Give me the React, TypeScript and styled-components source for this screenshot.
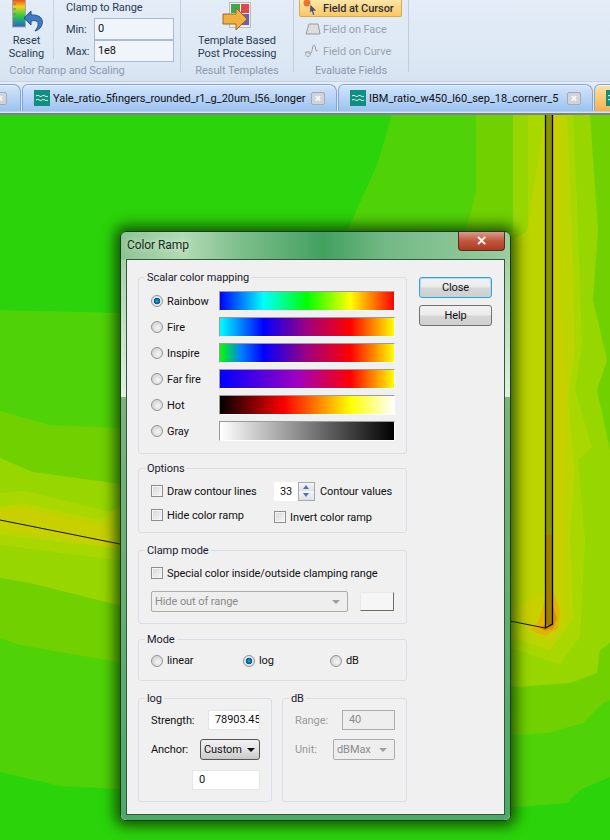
import React from "react";
import styled, { createGlobalStyle } from "styled-components";

const Global = createGlobalStyle`
  html, body { margin: 0; padding: 0; width: 610px; height: 840px; overflow: hidden; background: #2bd30a; }
  body { font-family: Roboto, "Noto Sans", sans-serif; font-size: 11px; letter-spacing: -0.08px; color: #111; }
`;
const Page = styled.div`width:610px;height:840px;display:flex;flex-direction:column;overflow:hidden;position:relative;`;
const Ribbon = styled.div`height:82px;display:flex;background:linear-gradient(#e3ecf7,#dde8f5 70%,#d7e3f1);border-bottom:1px solid #c5d2e2;flex:none;box-sizing:border-box;`;
const Group = styled.div<{ $w: number }>`width:${p => p.$w}px;flex:none;display:flex;flex-direction:column;position:relative;`;
const GroupBody = styled.div`height:64px;display:flex;`;
const GroupLabel = styled.div`height:14px;line-height:14px;text-align:center;color:#8b9bb0;`;
const Sep = styled.div`width:1px;height:72px;background:#c0ccdc;flex:none;`;
const InnerSep = styled.div`width:1px;height:59px;background:#c8d3e2;flex:none;`;
const BigButton = styled.div<{ $w: number }>`width:${p => p.$w}px;flex:none;display:flex;flex-direction:column;align-items:center;text-align:center;color:#2a3b52;line-height:13px;`;
const ClampCol = styled.div`display:flex;flex-direction:column;margin-left:12px;`;
const ClampTitle = styled.div`height:18px;line-height:15px;color:#2a3b52;`;
const ClampRow = styled.div`display:flex;align-items:center;height:22px;`;
const ClampLab = styled.div`width:28px;color:#2a3b52;`;
const ClampInput = styled.div`width:80px;height:22px;box-sizing:border-box;background:#f0f5fb;border:1px solid #abbbce;line-height:20px;padding-left:3px;`;
const SmallCol = styled.div`display:flex;flex-direction:column;margin-left:5px;`;
const SmallBtn = styled.div<{ $on?: boolean }>`height:22px;width:103px;box-sizing:border-box;display:flex;align-items:center;gap:2px;padding-left:2px;color:${p => p.$on ? "#2a3040" : "#9aa2ad"};font-weight:${p => p.$on ? 500 : 400};
  ${p => p.$on ? "background:linear-gradient(#fde6a8,#fbc75f);border:1px solid #e0a84a;border-top:0;border-radius:0 0 2px 2px;height:17px;margin-bottom:1px;padding-left:1px;" : ""}`;
const TabBar = styled.div`flex:none;display:flex;align-items:flex-end;overflow:hidden;position:relative;height:29px;padding-bottom:2px;border-bottom:2px solid #7c818a;
  background:linear-gradient(#e9eef5 0,#dfe8f3 3px,#dfe8f3 calc(100% - 2px),#a9c4e8 calc(100% - 2px),#e6eef8 100%);`;
const TabsStrip = styled.div`display:flex;align-items:flex-end;margin-left:-7px;`;
const Tab = styled.div<{ $w: number; $active?: boolean }>`width:${p => p.$w}px;height:27px;flex:none;box-sizing:border-box;display:flex;align-items:center;gap:3px;padding:0 11px 0 11px;margin-right:1px;border:1px solid #7fa6d8;border-bottom:0;border-radius:6px 8px 0 0;white-space:nowrap;overflow:hidden;color:#111;letter-spacing:0;
  background:${p => p.$active ? "linear-gradient(#fde2a8,#f8b04a)" : "linear-gradient(#d3e5fb,#9cc2f0)"};box-shadow:inset 0 1px 0 #eaf3fe;`;
const TabText = styled.span`flex:1;overflow:hidden;`;
const TabClose = styled.div`width:14px;height:13px;flex:none;box-sizing:border-box;background:#d0d4da;border:1px solid #a6abb2;border-radius:2px;color:#fff;font-size:11px;line-height:11px;text-align:center;font-weight:700;`;
const Canvas = styled.div`flex:1;position:relative;overflow:hidden;`;
const CanvasArt = styled.svg`display:block;width:610px;height:725px;`;
const Dialog = styled.div`position:absolute;left:120px;top:116px;width:391px;height:590px;box-sizing:border-box;border-radius:6px;border:1px solid #1d3a25;padding:27px 5px 5px;
  background:linear-gradient(transparent 27px,#a5d2a8 28px,#e2f0e2 165px),linear-gradient(90deg,#8cc494 0%,#b3dab4 16%,#7fc08d 30%,#42a05f 52%,#73b985 68%,#9acda0 100%);box-shadow:0 0 14px 5px rgba(10,50,0,.8);`;
const DialogSides = styled.div`position:absolute;left:0;right:0;top:165px;bottom:0;border-radius:0 0 6px 6px;background:linear-gradient(#7db27c,#4ea868);`;
const Title = styled.div`position:absolute;left:6px;top:6px;font-size:12px;color:#1a2a20;text-shadow:0 0 6px #e6f5e6;`;
const CloseX = styled.div`position:absolute;right:5px;top:0;width:47px;height:19px;box-sizing:border-box;border:1px solid #5c2a22;border-top:0;border-radius:0 0 4px 4px;background:linear-gradient(#d99a8e,#c2563f 50%,#ab3a22);color:#fff;font-size:14px;font-weight:700;line-height:16px;text-align:center;font-family:"DejaVu Sans",sans-serif;`;
const Client = styled.div`position:relative;height:100%;box-sizing:border-box;background:#f0f0f0;border:1px solid #2c5a3a;padding:0 0 0 11px;display:flex;flex-direction:column;`;
const Fieldset = styled.div<{ $w?: number; $h: number; $mt: number }>`position:relative;box-sizing:border-box;width:${p => p.$w ?? 269}px;height:${p => p.$h}px;margin-top:${p => p.$mt}px;border:1px solid #d9dfe6;border-radius:3px;flex:none;`;
const Legend = styled.div`position:absolute;left:6px;top:-7px;background:#f0f0f0;padding:0 2px;height:14px;line-height:14px;color:#1a1a2e;white-space:nowrap;`;
const RampGrid = styled.div`display:grid;grid-template-columns:68px 176px;grid-auto-rows:20px;row-gap:6px;padding:13px 0 0 12px;align-items:center;`;
const RadioLabel = styled.label`display:flex;align-items:center;gap:4px;color:#111;white-space:nowrap;`;
const RadioDot = styled.span<{ $on?: boolean }>`width:12px;height:12px;box-sizing:border-box;border-radius:50%;flex:none;border:1px solid #8f959b;
  background:${p => p.$on ? "radial-gradient(circle,#28aae2 0,#0a6aa0 2.2px,#0a4f80 3px,#e8eef2 3.6px,#cfd4d8 100%)" : "radial-gradient(circle at 60% 60%,#f5f5f5,#c9c9c9)"};`;
const Ramp = styled.div<{ $g: string }>`height:20px;box-sizing:border-box;border-top:1px solid #9a9a9a;border-left:1px solid #9a9a9a;border-bottom:1px solid #fff;border-right:1px solid #fff;background:linear-gradient(90deg,${p => p.$g});`;
const Check = styled.span`width:12px;height:12px;box-sizing:border-box;flex:none;border:1px solid #8e8f8f;background:linear-gradient(135deg,#d8d8d8,#f6f6f6);box-shadow:inset 0 0 0 1px #f4f4f4;`;
const OptionsGrid = styled.div`display:grid;grid-template-columns:123px 130px;padding:14px 0 0 12px;`;
const CheckLabel = styled.label<{ $mt?: number }>`display:flex;align-items:center;gap:4px;height:16px;margin-top:${p => p.$mt ?? 0}px;color:#111;white-space:nowrap;`;
const SpinRow = styled.div`display:flex;align-items:center;height:20px;margin-top:-2px;`;
const SpinValue = styled.div`width:24px;height:19px;background:#fff;line-height:19px;text-align:center;`;
const SpinBtns = styled.div`width:17px;height:19px;box-sizing:border-box;border:1px solid #a9a9a9;display:flex;flex-direction:column;margin-right:5px;`;
const SpinBtn = styled.div<{ $down?: boolean }>`flex:1;background:linear-gradient(#f4f6f8,#dde1e6);position:relative;&::after{content:"";position:absolute;left:4px;top:2px;border-left:3.5px solid transparent;border-right:3.5px solid transparent;${p => p.$down ? "border-top:4px solid #5470b0;" : "border-bottom:4px solid #5470b0;"}}`;
const ClampRowB = styled.div<{ $pt: number }>`display:flex;align-items:center;padding:${p => p.$pt}px 0 0 12px;`;
const DisabledSelect = styled.div<{ $w: number }>`width:${p => p.$w}px;height:21px;box-sizing:border-box;border:1px solid #acacac;border-radius:2px;background:#eeeeee;color:#8b8b8b;line-height:19px;padding-left:3px;position:relative;&::after{content:"";position:absolute;right:7px;top:8px;border-left:4px solid transparent;border-right:4px solid transparent;border-top:4px solid #a0a0a0;}`;
const ColorButton = styled.div`width:34px;height:19px;margin-left:12px;box-sizing:border-box;border:1px solid;border-color:#e8e8e8 #6d6d6d #6d6d6d #e8e8e8;background:#f6f6f6;`;
const ModeRow = styled.div`display:flex;padding:14px 0 0 12px;`;
const ModeCell = styled.div<{ $w: number }>`width:${p => p.$w}px;`;
const Columns = styled.div`display:flex;gap:10px;margin-top:17px;`;
const FormRow = styled.div<{ $off?: boolean; $top: number; $end?: boolean }>`position:absolute;left:12px;right:11px;top:${p => p.$top}px;display:flex;align-items:center;justify-content:${p => p.$end ? "flex-end" : "space-between"};color:${p => p.$off ? "#9a9a9a" : "#111"};`;
const TextBox = styled.div<{ $w: number; $off?: boolean }>`width:${p => p.$w}px;height:20px;box-sizing:border-box;background:${p => p.$off ? "#eeeeee" : "#fff"};border:1px solid ${p => p.$off ? "#acacac" : "#e2e6ea"};line-height:18px;padding:0 2px 0 6px;overflow:hidden;white-space:nowrap;color:${p => p.$off ? "#8b8b8b" : "#111"};`;
const ComboBtn = styled.div`width:60px;height:21px;box-sizing:border-box;border:1px solid #555;border-radius:3px;background:linear-gradient(#f1f1f1,#e3e3e3 50%,#c9c9c9);line-height:19px;padding-left:3px;position:relative;&::after{content:"";position:absolute;right:4px;top:8px;border-left:4px solid transparent;border-right:4px solid transparent;border-top:4px solid #111;}`;
const Side = styled.div`position:absolute;left:292px;top:17px;display:flex;flex-direction:column;gap:7px;`;
const PushBtn = styled.div<{ $def?: boolean }>`width:73px;height:21px;box-sizing:border-box;border:1px solid ${p => p.$def ? "#3c9ed6" : "#707070"};border-radius:3px;background:linear-gradient(#f2f2f2,#ebebeb 48%,#d6d6d6 52%,#cfcfcf);text-align:center;line-height:19px;color:#111;${p => p.$def ? "box-shadow:inset 0 0 0 1px #a8dcf4;" : ""}`;

const Band = ({ p, c }: { p: string; c: string }) => <polygon points={p} fill={c} />;

const ramps = [
  { n: "Rainbow", g: "#0000ff 0,#00ffff 25%,#00ff00 50%,#ffff00 75%,#ff0000 100%", on: true },
  { n: "Fire", g: "#00ffff 0,#0000ff 25%,#a00080 50%,#ff0000 75%,#ffff00 100%" },
  { n: "Inspire", g: "#00ff00 0,#0080ff 12%,#0000ff 25%,#a00080 50%,#ff0000 75%,#ffff00 100%" },
  { n: "Far fire", g: "#0000ff 0,#a000c0 45%,#ff0000 75%,#ffff00 100%" },
  { n: "Hot", g: "#000 0,#ff0000 37%,#ffff00 75%,#fff 100%" },
  { n: "Gray", g: "#fff 0,#000 100%" },
];

const TabGlyph = () => (
  <svg width="16" height="16" viewBox="0 0 16 16" style={{ flex: "none" }}><rect width="16" height="16" fill="#0f8f80" /><path d="M2 6c3-2 4 2 6 0s4 2 6 0M2 10c3-2 4 2 6 0s4 2 6 0" stroke="#fff" fill="none" /></svg>
);

export default function App() {
  return (
    <Page>
      <Global />
      <Ribbon>
        <Group $w={53}>
          <GroupBody>
            <BigButton $w={53}>
              <svg width="53" height="34" viewBox="0 0 53 34">
                <defs><linearGradient id="rb" x1="0" y1="0" x2="0" y2="1"><stop offset="0" stopColor="#e83020" /><stop offset=".3" stopColor="#f0d020" /><stop offset=".6" stopColor="#30d040" /><stop offset="1" stopColor="#2060d0" /></linearGradient></defs>
                <rect x="12.5" y="-2" width="13" height="29" fill="url(#rb)" stroke="#a8a8a8" />
                <path d="M13 4h3M13 9h3M13 14h3M13 19h3M13 24h3" stroke="#777" />
                <path d="M31 11 L24 18 L31 25 V21 C38 19 41 24 35 31 C44 29 47 14 31 15 Z" fill="#3a7cc8" stroke="#1f4f90" strokeWidth="1" />
              </svg>
              Reset<br />Scaling
            </BigButton>
          </GroupBody>
        </Group>
        <InnerSep />
        <Group $w={126}>
          <GroupBody>
            <ClampCol>
              <ClampTitle>Clamp to Range</ClampTitle>
              <ClampRow><ClampLab>Min:</ClampLab><ClampInput>0</ClampInput></ClampRow>
              <ClampRow><ClampLab>Max:</ClampLab><ClampInput>1e8</ClampInput></ClampRow>
            </ClampCol>
          </GroupBody>
          <GroupLabel style={{ position: "absolute", left: -54, width: 134, top: 64 }}>Color Ramp and Scaling</GroupLabel>
        </Group>
        <Sep />
        <Group $w={112}>
          <GroupBody>
            <BigButton $w={112}>
              <svg width="32" height="34" viewBox="0 0 32 34">
                <rect x="8.5" y="2.5" width="21" height="25" fill="#eee" stroke="#bbb" />
                <rect x="10" y="4" width="9" height="9" fill="#3caa50" /><rect x="20" y="4" width="8" height="9" fill="#e04848" /><rect x="20" y="14" width="8" height="11" fill="#6a5fb0" />
                <path d="M2 14h13V8l11 11-11 11v-6H2z" fill="#f2b040" stroke="#9a6a20" />
              </svg>
              Template Based<br />Post Processing
            </BigButton>
          </GroupBody>
          <GroupLabel>Result Templates</GroupLabel>
        </Group>
        <Sep />
        <Group $w={114}>
          <SmallCol>
            <SmallBtn $on><svg width="20" height="16" viewBox="0 0 20 16"><circle cx="6" cy="3" r="3.5" fill="#e8732a" /><path d="M9 4l7 7-3.5 0 1.5 4-2 .5-1.5-4-2 2z" fill="#555" stroke="#fff" strokeWidth=".5" /></svg>Field at Cursor</SmallBtn>
            <SmallBtn><svg width="20" height="15" viewBox="0 0 20 15"><path d="M8 2h9l2 10H5z" fill="#ddd" stroke="#999" /></svg>Field on Face</SmallBtn>
            <SmallBtn><svg width="20" height="15" viewBox="0 0 20 15"><path d="M4 9c3-3 4 3 6 0s1-8 3-8 1 9 4 5" fill="none" stroke="#999" /><circle cx="7" cy="10" r="2.5" fill="none" stroke="#aaa" /></svg>Field on Curve</SmallBtn>
          </SmallCol>
          <GroupLabel style={{ position: "absolute", top: 64, left: 0, width: 114 }}>Evaluate Fields</GroupLabel>
        </Group>
        <Sep />
      </Ribbon>
      <TabBar>
        <TabsStrip>
          <Tab $w={28} style={{ padding: "0 0 0 0", justifyContent: "flex-start", borderLeft: 0, borderRadius: "0 8px 0 0" }}><TabClose>×</TabClose></Tab>
          <Tab $w={315}><TabGlyph /><TabText>Yale_ratio_5fingers_rounded_r1_g_20um_l56_longer</TabText><TabClose>×</TabClose></Tab>
          <Tab $w={255}><TabGlyph /><TabText>IBM_ratio_w450_l60_sep_18_cornerr_5</TabText><TabClose>×</TabClose></Tab>
          <Tab $w={30} $active><TabGlyph /></Tab>
        </TabsStrip>
      </TabBar>
      <Canvas>
        <CanvasArt viewBox="0 115 610 725">
          <rect x="0" y="115" width="610" height="725" fill="#2bd30a" />
          <Band c="#50d208" p="392,115 610,115 610,777 580,790 567,803 517,807 118,789 60,786 0,772 0,310 120,313 347,231 377,165" />
          <Band c="#70d000" p="476,115 610,115 610,700 603,703 583,723 547,733 517,735 118,662 20,645 0,638 0,411 50,425 120,428 466,231 476,190" />
          <Band c="#98d600" p="513,115 590,115 598,230 593,300 607,360 597,390 610,450 610,643 600,650 597,673 570,683 517,687 118,605 30,583 0,578 0,458 33,472 120,484 513,231" />
          <Band c="#a8d800" p="528,115 573,115 578,230 582,345 575,390 592,447 578,460 585,540 580,637 570,650 560,665 518,650 118,560 0,545 0,493 25,491 110,512 528,231" />
          <Band c="#bcd400" p="545,115 567,115 572,230 575,350 568,400 575,470 570,540 572,570 573,620 550,650 520,640 120,548 0,535 0,507 22,503 100,520 527,231" />
          <Band c="#c8d000" p="553,115 560,115 560,300 567,390 563,570 565,615 553,640 530,632 505,615 545,590" />
          <Band c="#c8d000" p="0,510 25,508 122,530 122,550 60,538 0,528" />
          <Band c="#e2b400" p="545,600 553,590 560,610 558,628 545,636 530,630 538,622" />
          <Band c="#d89400" p="553,606 557,618 553,629 545,631 540,628 545,624" />
          <rect x="545" y="115" width="8" height="420" fill="#8a9200" />
          <rect x="545" y="535" width="8" height="90" fill="#a07c00" />
          <path d="M545.5 115V628L552.5 624V115" stroke="#000" strokeWidth="1.3" fill="none" />
          <path d="M0 520L120 544" stroke="#111" strokeWidth="1" />
          <path d="M510 621L545 628" stroke="#111" strokeWidth="1" />
        </CanvasArt>
        <Dialog>
          <DialogSides />
          <Title>Color Ramp</Title>
          <CloseX>×</CloseX>
          <Client>
            <Fieldset $h={177} $mt={17}>
              <Legend>Scalar color mapping</Legend>
              <RampGrid>
                {ramps.map(r => (
                  <React.Fragment key={r.n}>
                    <RadioLabel><RadioDot $on={r.on} />{r.n}</RadioLabel>
                    <Ramp $g={r.g} />
                  </React.Fragment>
                ))}
              </RampGrid>
            </Fieldset>
            <Fieldset $h={65} $mt={14}>
              <Legend>Options</Legend>
              <OptionsGrid>
                <div>
                  <CheckLabel><Check />Draw contour lines</CheckLabel>
                  <CheckLabel $mt={8}><Check />Hide color ramp</CheckLabel>
                </div>
                <div>
                  <SpinRow><SpinValue>33</SpinValue><SpinBtns><SpinBtn /><SpinBtn $down /></SpinBtns>Contour values</SpinRow>
                  <CheckLabel $mt={8}><Check />Invert color ramp</CheckLabel>
                </div>
              </OptionsGrid>
            </Fieldset>
            <Fieldset $h={74} $mt={17}>
              <Legend>Clamp mode</Legend>
              <ClampRowB $pt={14}><CheckLabel><Check />Special color inside/outside clamping range</CheckLabel></ClampRowB>
              <ClampRowB $pt={10}><DisabledSelect $w={197}>Hide out of range</DisabledSelect><ColorButton /></ClampRowB>
            </Fieldset>
            <Fieldset $h={42} $mt={15}>
              <Legend>Mode</Legend>
              <ModeRow>
                <ModeCell $w={92}><RadioLabel><RadioDot />linear</RadioLabel></ModeCell>
                <ModeCell $w={87}><RadioLabel><RadioDot $on />log</RadioLabel></ModeCell>
                <ModeCell $w={60}><RadioLabel><RadioDot />dB</RadioLabel></ModeCell>
              </ModeRow>
            </Fieldset>
            <Columns>
              <Fieldset $w={134} $h={104} $mt={0}>
                <Legend>log</Legend>
                <FormRow $top={11}>Strength:<TextBox $w={52}>78903.45</TextBox></FormRow>
                <FormRow $top={40}>Anchor:<ComboBtn>Custom</ComboBtn></FormRow>
                <FormRow $top={71} $end><TextBox $w={68}>0</TextBox></FormRow>
              </Fieldset>
              <Fieldset $w={125} $h={104} $mt={0}>
                <Legend>dB</Legend>
                <FormRow $off $top={11}>Range:<TextBox $off $w={53}>40</TextBox></FormRow>
                <FormRow $off $top={40}>Unit:<DisabledSelect $w={62}>dBMax</DisabledSelect></FormRow>
              </Fieldset>
            </Columns>
            <Side>
              <PushBtn $def>Close</PushBtn>
              <PushBtn>Help</PushBtn>
            </Side>
          </Client>
        </Dialog>
      </Canvas>
    </Page>
  );
}
